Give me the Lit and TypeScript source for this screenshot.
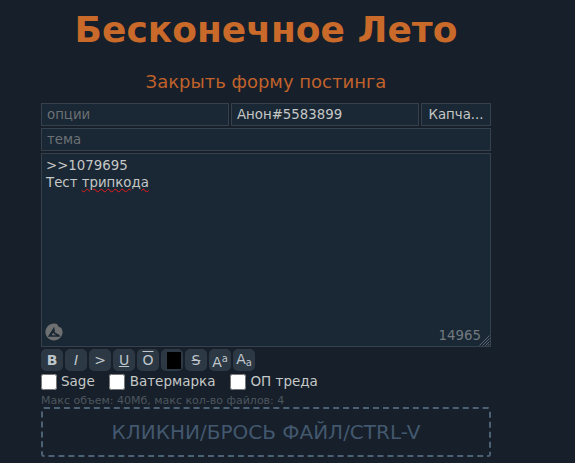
import { LitElement, html, css } from "lit";
import { customElement } from "lit/decorators.js";

@customElement("app-root")
export class AppRoot extends LitElement {
  static styles = css`
    :host { display: block; height: 463px; overflow: hidden; background: #161f2a; font-family: "DejaVu Sans", sans-serif; }
    .page { width: 532px; display: flex; flex-direction: column; align-items: center; }
    h1 { margin: 0; padding-top: 9px; font-size: 36px; line-height: 42px; font-weight: 700; color: #c96a2a; white-space: nowrap; }
    .toggle { margin-top: 20px; font-size: 18px; line-height: 22px; color: #c0622a; }
    form { margin-top: 10px; width: 450px; display: flex; flex-direction: column; gap: 2px; }
    .row { display: flex; gap: 2px; }
    .field { box-sizing: border-box; height: 23px; border: 1px solid #35414d; background: #1a2734; color: #c5c8c6; font-size: 13.333px; line-height: 21px; padding: 0 5px; white-space: nowrap; }
    .opt { width: 188px; color: #6b7175; }
    .name { width: 188px; }
    .cap { width: 70px; text-align: center; padding: 0; }
    .subject { color: #6b7175; }
    .text { position: relative; box-sizing: border-box; height: 194px; border: 1px solid #35414d; background: #1a2734; color: #c5c8c6; font-size: 13.333px; line-height: 17px; padding: 3px 4px; }
    .wavy { text-decoration: underline wavy #e81c1c 1px; text-underline-offset: 1px; }
    .logo { position: absolute; left: 3px; bottom: 5px; width: 18px; height: 18px; }
    .count { position: absolute; right: 9px; bottom: 2px; font-size: 13.333px; line-height: 17px; color: #727a80; }
    .grip { position: absolute; right: 0; bottom: 0; width: 11px; height: 11px; }
    .tools { display: flex; gap: 2px; }
    .tool { box-sizing: border-box; width: 22px; height: 22px; border-radius: 5px; background: #2c3843; color: #bfc6cc; font-size: 14px; display: flex; align-items: center; justify-content: center; line-height: 1; }
    .b { font-weight: 700; }
    .i { font-style: italic; }
    .u { text-decoration: underline; }
    .o { text-decoration: overline; }
    .s { text-decoration: line-through; }
    .swatch { justify-content: flex-start; padding-left: 6px; }
    .swatch i { display: block; width: 14px; height: 17px; background: #000; }
    .sup, .sub { font-size: 10px; }
    .sup { align-self: flex-start; margin-top: 5px; }
    .sub { align-self: flex-end; margin-bottom: 3px; }
    .big-low { align-self: flex-end; margin-bottom: 2px; }
    .big-high { align-self: flex-start; margin-top: 3px; }
    .checks { display: flex; align-items: center; height: 18px; color: #c5c8c6; font-size: 13.5px; }
    .checks label { display: flex; align-items: center; }
    .checks input { width: 16px; height: 16px; margin: 0 4px 0 0; }
    .checks span { margin-bottom: 2px; }
    .l2 { margin-left: 14px; }
    .l2 input { margin-right: 5px; }
    .l3 { margin-left: 15px; }
    .limit { margin-top: 1px; font-size: 11px; line-height: 14px; color: #4d565d; }
    .drop { box-sizing: border-box; margin-top: -3px; height: 50px; border: 2px dashed #4d6175; border-radius: 3px; color: #43586e; font-size: 20px; display: flex; align-items: center; justify-content: center; white-space: nowrap; }
  `;

  render() {
    return html`
      <div class="page">
        <h1>Бесконечное Лето</h1>
        <div class="toggle">Закрыть форму постинга</div>
        <form>
          <div class="row">
            <div class="field opt">опции</div>
            <div class="field name">Анон#5583899</div>
            <div class="field cap">Капча...</div>
          </div>
          <div class="field subject">тема</div>
          <div class="text">
            <div>&gt;&gt;1079695</div>
            <div>Тест <span class="wavy">трипкода</span></div>
            <svg class="logo" viewBox="0 0 18 18" aria-hidden="true">
              <path fill="#6d6f70" d="M9 .4c1.300 0 2.400.3 3.400.8.3 1.900 1.500 3 3.400 3.200 1.100 1.400 1.800 3 1.800 4.700 0 4.800-3.900 8.500-8.600 8.500S.4 13.800.4 9.100 4.200.4 9 .4z"/>
              <path fill="#1a2734" d="M9.200 3.700 2.900 13.700h12.600c-1-1.800-2.500-2.700-3.800-3.100-1.500-.5-2.300-1.400-1.900-3z"/>
              <path fill="#6d6f70" d="M8 9.800 6.700 12.300h4.600c-1.300-.6-2.400-1.200-3.300-2.500z"/>
            </svg>
            <span class="count">14965</span>
            <svg class="grip" viewBox="0 0 11 11" aria-hidden="true">
              <path stroke="#5a6670" stroke-width="1" d="M10.500 .5.500 10.500M10.500 3.500 3.500 10.500M10.500 6.500 6.500 10.500M10.500 9 9 10.500"/>
            </svg>
          </div>
          <div class="tools">
            <div class="tool b">B</div>
            <div class="tool i">I</div>
            <div class="tool">&gt;</div>
            <div class="tool"><span class="u">U</span></div>
            <div class="tool"><span class="o">O</span></div>
            <div class="tool swatch"><i></i></div>
            <div class="tool"><span class="s">S</span></div>
            <div class="tool"><span class="big-low">A</span><span class="sup">a</span></div>
            <div class="tool"><span class="big-high">A</span><span class="sub">a</span></div>
          </div>
          <div class="checks">
            <label><input type="checkbox" /><span>Sage</span></label>
            <label class="l2"><input type="checkbox" /><span>Ватермарка</span></label>
            <label class="l3"><input type="checkbox" /><span>ОП треда</span></label>
          </div>
          <div class="limit">Макс объем: 40Мб, макс кол-во файлов: 4</div>
          <div class="drop">КЛИКНИ/БРОСЬ ФАЙЛ/CTRL-V</div>
        </form>
      </div>
    `;
  }
}
